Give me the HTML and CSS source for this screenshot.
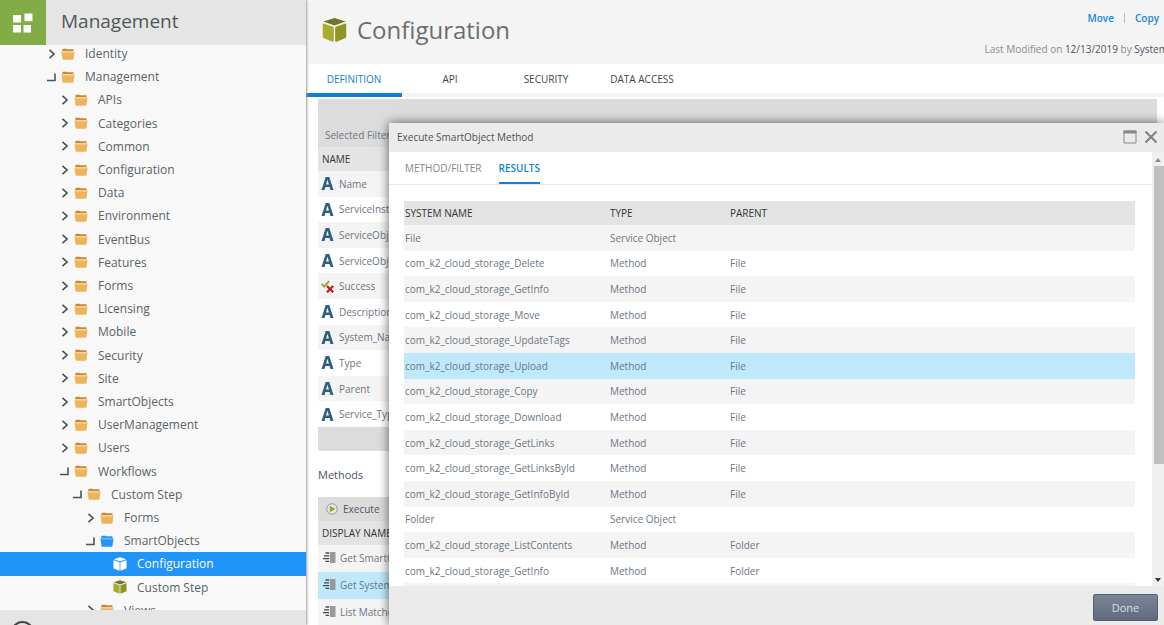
FILE: index.html
```html
<!DOCTYPE html>
<html lang="en">
<head>
<meta charset="utf-8">
<title>Management</title>
<link rel="stylesheet" href="styles.css">
</head>
<body>
<svg class="defs" aria-hidden="true">
  <symbol id="right" viewBox="0 0 10 12"><path d="M2.500 1.800 7 6 2.500 10.200" fill="none" stroke="#4a5558" stroke-width="1.700"/></symbol>
  <symbol id="open" viewBox="0 0 10 12"><path d="M0 9.500H8V2.500" fill="none" stroke="#4a5558" stroke-width="1.600"/></symbol>
  <symbol id="folder" viewBox="0 0 14 12"><path class="back" d="M1.300 2V1.500L2 .7H5.500L6 1.300H12.500V3H1.300Z"/><path class="front" d="M.5 3.500H13.500L12.500 11Q12.400 11.700 11.600 11.700H2.400Q1.600 11.700 1.500 11Z"/><path class="rim" d="M.5 3.500H13.500L13.300 4.800H.7Z"/></symbol>
  <symbol id="cube" viewBox="0 0 26 26"><path class="top" d="M13 .6 24.600 4.200 13 8.400 1.400 4.200Z"/><path class="left" d="M1.600 6.200Q.8 5.900.8 6.800V20.200Q.8 21 1.600 21.300L10.800 25.100Q12.300 25.600 12.300 24.200V10.700Q12.300 10 11.600 9.700Z"/><path class="side" d="M24.400 6.200Q25.200 5.900 25.200 6.800V20.200Q25.200 21 24.400 21.300L15.200 25.100Q13.700 25.600 13.700 24.200V10.700Q13.700 10 14.400 9.700Z"/></symbol>
  <symbol id="letter" viewBox="0 0 12 13"><path d="M0 13 4.200 0H7.800L12 13H8.900L8.100 10H3.900L3.100 13ZM4.600 7.500H7.400L6 2.800Z" fill="#2f617f" fill-rule="evenodd"/></symbol>
  <symbol id="bool" viewBox="0 0 12 12"><path d="M.7 3.500 3 6 7.500 1" fill="none" stroke="#9ba72b" stroke-width="1.800"/><path d="M5.500 5.500 11.300 11.300M11.300 5.500 5.500 11.300" stroke="#c01822" stroke-width="2"/></symbol>
  <symbol id="method" viewBox="0 0 13 12"><path d="M7 .5H12.500V11.500H7Z" fill="#999"/><path d="M2.500 1.500H6.200M1 4.300H6.200M0 7.100H6.200M2.500 9.900H6.200" stroke="#3d4a4c" stroke-width="1.300"/></symbol>
</svg>
<div class="app">
  <aside class="side-panel">
    <header class="brand">
      <button class="launcher" aria-label="Applications"><svg viewBox="0 0 20 20"><path d="M0 2H8V9.500H0ZM11.500 .5H19.500V8.300H11.500ZM0 12H8V19.500H0ZM10.500 12H18V19.500H10.500Z" fill="#fff"/></svg></button>
      <h2 class="brand-name">Management</h2>
    </header>
    <nav class="tree-view">
      <ul class="tree" id="tree"></ul>
    </nav>
    <footer class="side-foot"><button class="round" aria-label="User"></button></footer>
  </aside>
  <main class="main">
    <header class="page-head">
      <div class="page-title"><svg class="cube big"><use href="#cube"/></svg><h1>Configuration</h1></div>
      <div class="page-meta">
        <div class="actions"><a href="#">Move</a><span class="bar"></span><a href="#">Copy</a></div>
        <p class="modified">Last Modified on <b>12/13/2019</b> by <b>System</b></p>
      </div>
    </header>
    <nav class="tabs">
      <button class="tab active">DEFINITION</button><button class="tab">API</button><button class="tab">SECURITY</button><button class="tab">DATA ACCESS</button>
    </nav>
    <div class="content">
      <section class="panel">
        <div class="filter">Selected Filter</div>
        <table class="grid properties">
          <thead><tr><th>NAME</th></tr></thead>
          <tbody id="properties"></tbody>
        </table>
        <div class="panel-foot"></div>
      </section>
      <h3 class="section-title">Methods</h3>
      <section class="panel">
        <div class="toolbar"><button class="execute"><svg viewBox="0 0 12 12"><circle cx="6" cy="6" r="5.300" fill="#e6e6e6" stroke="#999"/><path d="M3.800 2.800 9.300 6 3.800 9.200Z" fill="#9ba61f"/></svg>Execute</button></div>
        <table class="grid methods">
          <thead><tr><th>DISPLAY NAME</th></tr></thead>
          <tbody>
            <tr><td><div class="cell"><svg class="glyph"><use href="#method"/></svg>Get SmartObjects</div></td></tr>
            <tr class="selected"><td><div class="cell"><svg class="glyph"><use href="#method"/></svg>Get System Objects</div></td></tr>
            <tr><td><div class="cell"><svg class="glyph"><use href="#method"/></svg>List Matches</div></td></tr>
          </tbody>
        </table>
      </section>
    </div>
  </main>
  <section class="dialog" role="dialog" aria-labelledby="dialog-title">
    <header class="dialog-head">
      <h2 id="dialog-title">Execute SmartObject Method</h2>
      <button class="tool" aria-label="Maximize"><svg viewBox="0 0 14 14"><path d="M1 1H13V13H1Z" fill="none" stroke="#858a8e"/><path d="M.5 .5H13.500V3.500H.5Z" fill="#858a8e"/></svg></button>
      <button class="tool" aria-label="Close"><svg viewBox="0 0 14 14"><path d="M1.500 1.500 12.500 12.500M12.500 1.500 1.500 12.500" stroke="#7f8488" stroke-width="2.200"/></svg></button>
    </header>
    <div class="dialog-body">
      <div class="dialog-main">
        <nav class="subtabs"><button class="subtab">METHOD/FILTER</button><button class="subtab active">RESULTS</button></nav>
        <div class="results-wrap">
          <table class="results">
            <colgroup><col class="c-name"><col class="c-type"><col></colgroup>
            <thead><tr><th>SYSTEM NAME</th><th>TYPE</th><th>PARENT</th></tr></thead>
            <tbody id="results"></tbody>
          </table>
        </div>
      </div>
      <div class="scroll"><svg class="arrow up" viewBox="0 0 6 4"><path d="M0 4 3 0 6 4Z"/></svg><div class="track"><div class="thumb"></div></div><svg class="arrow down" viewBox="0 0 6 4"><path d="M0 0 3 4 6 0Z"/></svg></div>
    </div>
    <footer class="dialog-foot"><button class="done">Done</button></footer>
  </section>
</div>
<script src="app.js"></script>
</body>
</html>
```

FILE: styles.css
```css
* { box-sizing: border-box; }
body { margin: 0; font-family: "Open Sans", "Noto Sans", sans-serif; font-size: 10px; line-height: 16px; color: #6c7683; background: #fff; }
h1, h2, h3, p, ul { margin: 0; padding: 0; font-weight: 400; }
button { font: inherit; color: inherit; border: 0; padding: 0; background: none; }
a { color: #1b87d1; text-decoration: none; }
.defs { display: none; }
.app { height: 100vh; display: flex; position: relative; overflow: hidden; }

.side-panel { width: 306px; flex: none; display: flex; flex-direction: column; background: #f8f8f8; position: relative; z-index: 1; box-shadow: 1px 0 2px #999; }
.brand { height: 45px; flex: none; display: flex; background: #e5e5e5; }
.launcher { width: 46px; background: #82ad46; display: grid; place-items: center; }
.launcher svg { width: 20px; height: 20px; }
.brand-name { margin-left: 15px; font-size: 19px; line-height: 42px; color: #505759; }
.tree-view { flex: 1; min-height: 0; overflow: hidden; display: flex; }
.tree { list-style: none; flex: 1; margin: -3px 0 -12px; display: grid; grid-auto-rows: 1fr; }
.node { display: flex; align-items: center; min-height: 0; font-size: 12px; line-height: 23px; color: #596467; }
.level-0 { padding-left: 47px; }
.level-1 { padding-left: 60px; }
.level-2 { padding-left: 73px; }
.level-3 { padding-left: 86px; }
.level-4 { padding-left: 99px; }
.twisty { width: 10px; height: 12px; flex: none; margin-right: 4px; }
.icon { width: 14px; height: 12px; flex: none; margin-right: 10px; }
.icon.cube { height: 14px; }
.back { fill: var(--back, #c88735); }
.front { fill: var(--front, #edb45c); }
.rim { fill: var(--rim, #f6cd85); }
.blue { --back: #2196f8; --front: #2196f8; --rim: #53adfa; }
.top { fill: var(--face, #6d7826); }
.left { fill: var(--face, #aaac2d); }
.side { fill: var(--face, #8f9426); }
.white { --face: #fff; }
.node.current { background: #2094f7; color: #fff; font-weight: 500; }
.side-foot { height: 15px; flex: none; background: #e5e5e5; overflow: hidden; padding: 11px 0 0 11px; }
.round { width: 23px; height: 23px; display: block; border: 2px solid #444; border-radius: 50%; }

.main { flex: 1; min-width: 0; display: flex; flex-direction: column; padding-left: 2px; }
.page-head { height: 64px; flex: none; background: #f4f4f4; display: flex; justify-content: space-between; padding-left: 14px; }
.page-title { display: flex; align-items: center; height: 60px; gap: 10px; }
.page-title h1 { font-size: 24px; line-height: 32px; color: #6d6d6d; }
.big { width: 25px; height: 26px; }
.page-meta { padding-top: 10px; text-align: right; white-space: nowrap; }
.actions { display: flex; justify-content: flex-end; align-items: center; gap: 10px; font-weight: 600; padding-right: 5px; }
.bar { width: 1px; height: 10px; background: #bbb; }
.modified { margin-top: 15px; margin-right: -4px; color: #898d92; }
.modified b { font-weight: 400; color: #4c5560; }
.tabs { height: 33px; flex: none; display: flex; border-bottom: 4px solid #f4f4f4; margin-left: -2px; }
.tab { width: 96px; height: 33px; color: #3d474a; border-bottom: 4px solid transparent; }
.tab.active { color: #0f83d0; border-color: #0883d3; font-weight: 500; }
.content { padding: 2px 7px 0 10px; }
.panel { background: #dcdcdc; border-radius: 0 0 3px 3px; }
.filter { height: 48px; padding: 28px 7px 0; }
.grid, .results { width: 100%; border-collapse: collapse; table-layout: fixed; }
th { height: 24px; padding: 0 1px; text-align: left; font-weight: 400; color: #303639; background: #e4e4e4; }
td { height: 25px; padding: 0 1px; }
tbody tr { background: #fff; }
tbody tr:nth-child(odd) { background: #f4f4f4; }
tbody tr.selected { background: #bfe9fb; }
.grid th { padding-left: 4px; }
.grid td { padding-left: 3px; }
.properties { height: 280px; }
.cell { display: flex; align-items: center; gap: 5px; white-space: nowrap; }
.glyph { width: 13px; height: 13px; flex: none; }
.panel-foot { height: 24px; }
.section-title { margin: 14px 0 13px; font-size: 11px; font-weight: 500; line-height: 19px; color: #4c5560; }
.toolbar { height: 24px; padding-left: 8px; display: flex; }
.execute { display: flex; align-items: center; gap: 5px; font-weight: 500; color: #4c5560; }
.execute svg { width: 12px; height: 12px; }
.methods td { height: 27px; padding: 0 0 2px 5px; }
.methods .cell { gap: 4px; }

.dialog { position: absolute; left: 389px; right: 0; top: 123px; bottom: 0; z-index: 2; display: flex; flex-direction: column; background: #fff; box-shadow: 0 0 10px rgba(0, 0, 0, .6); }
.dialog-head { height: 29px; flex: none; display: flex; align-items: center; gap: 7px; padding: 0 6px 1px 8px; background: #ebebeb; }
.dialog-head h2 { flex: 1; font-size: 10px; font-weight: 500; color: #505050; }
.tool, .tool svg { width: 14px; height: 14px; display: block; }
.dialog-body { flex: 1; min-height: 0; display: flex; }
.dialog-main { flex: 1; min-width: 0; overflow: hidden; }
.subtabs { height: 33px; border-bottom: 1px solid #e6e6e6; padding-left: 16px; display: flex; gap: 17px; color: #858585; }
.subtab { height: 32px; padding-top: 2px; border-bottom: 2px solid transparent; }
.subtab.active { color: #0f83d0; font-weight: 600; border-color: #0f83d0; }
.results-wrap { padding: 16px 17px 0 15px; }
.results { height: 408px; }
.c-name { width: 205px; }
.c-type { width: 120px; }
.scroll { width: 12px; flex: none; display: flex; flex-direction: column; align-items: center; background: #f0f0f0; padding: 6px 0 4px; }
.arrow { width: 6px; height: 4px; fill: #333; }
.arrow.up { fill: #8a8a8a; }
.track { flex: 1; width: 100%; margin: 4px 0; padding-left: 2px; }
.thumb { height: 73%; background: #c0c0c0; }
.dialog-foot { height: 39px; flex: none; background: #ebebeb; display: flex; justify-content: flex-end; align-items: center; padding: 4px 6px 0 0; }
.done { width: 65px; height: 27px; font-size: 11px; color: #dadfe6; background: linear-gradient(#7c8596, #616b7d); border: 1px solid #526078; border-radius: 2px; }
```

FILE: app.js
```js
const use = (id, cls) => `<svg class="${cls}"><use href="#${id}"/></svg>`;

const nodes = [
  [0, "right", "Identity"], [0, "open", "Management"],
  ...["APIs", "Categories", "Common", "Configuration", "Data", "Environment", "EventBus", "Features", "Forms", "Licensing", "Mobile", "Security", "Site", "SmartObjects", "UserManagement", "Users"].map(n => [1, "right", n]),
  [1, "open", "Workflows"], [2, "open", "Custom Step"], [3, "right", "Forms"], [3, "open", "SmartObjects", "blue"],
  [4, "", "Configuration", "white"], [4, "", "Custom Step", ""], [3, "right", "Views"]
];
document.getElementById("tree").innerHTML = nodes.map(([level, state, name, tone = ""]) =>
  `<li class="node level-${level}${tone === "white" ? " current" : ""}">` +
  (state ? use(state, "twisty") + use("folder", "icon " + tone) : '<span class="twisty"></span>' + use("cube", "icon cube " + tone)) +
  `<span>${name}</span></li>`).join("");

const properties = ["Name", "ServiceInstance", "ServiceObject", "ServiceObjectType", "Success", "Description", "System_Name", "Type", "Parent", "Service_Type"];
document.getElementById("properties").innerHTML = properties.map(name =>
  `<tr><td><div class="cell">${use(name === "Success" ? "bool" : "letter", "glyph")}${name}</div></td></tr>`).join("");

const p = "com_k2_cloud_storage_";
const results = [["File"], ...["Delete", "GetInfo", "Move", "UpdateTags", "Upload", "Copy", "Download", "GetLinks", "GetLinksById", "GetInfoById"].map(n => [p + n, "File"]),
  ["Folder"], [p + "ListContents", "Folder"], [p + "GetInfo", "Folder"]];
document.getElementById("results").innerHTML = results.map(([name, parent]) =>
  `<tr${name === p + "Upload" ? ' class="selected"' : ""}><td>${name}</td><td>${parent ? "Method" : "Service Object"}</td><td>${parent || ""}</td></tr>`).join("") +
  "<tr><td></td><td></td><td></td></tr>";
```
